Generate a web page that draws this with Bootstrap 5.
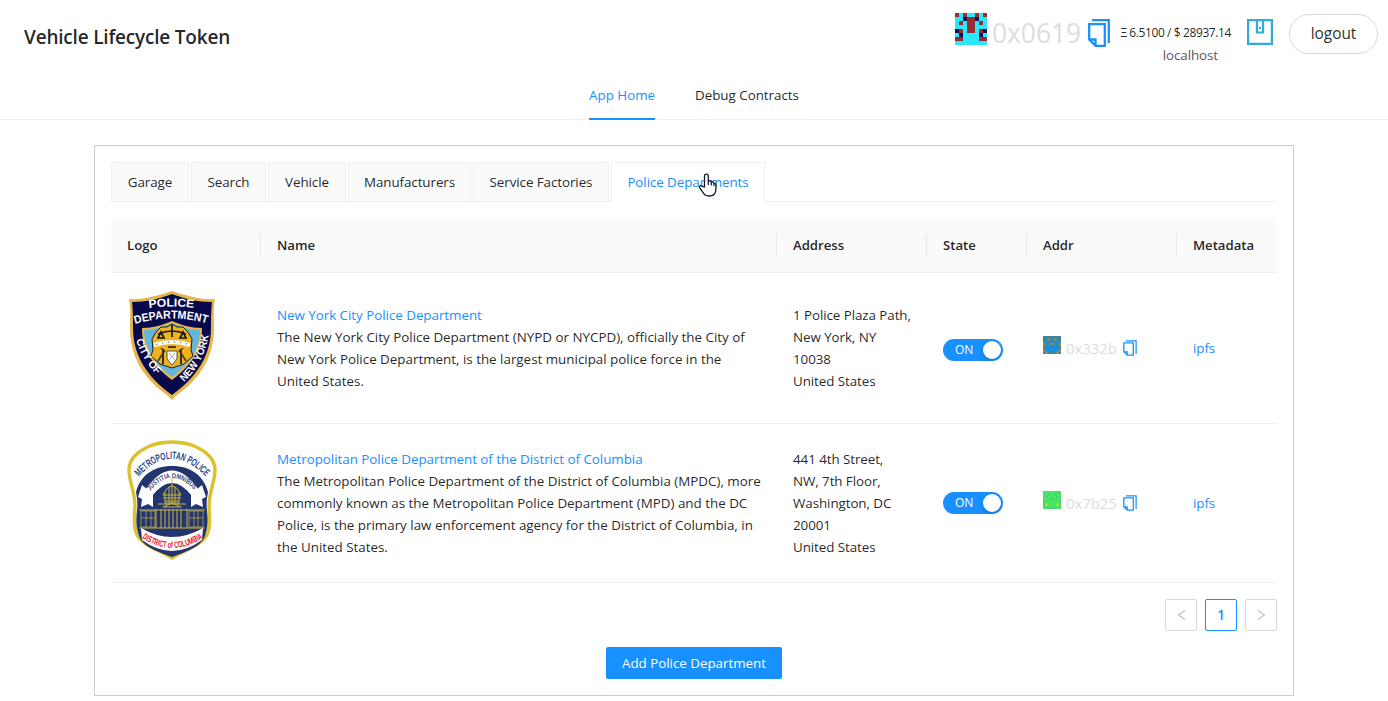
<!DOCTYPE html>
<html lang="en">
<head>
<meta charset="utf-8">
<title>Vehicle Lifecycle Token</title>
<link href="https://cdn.jsdelivr.net/npm/bootstrap@5.3.0/dist/css/bootstrap.min.css" rel="stylesheet">
<style>
:root{--blue:#1890ff;--line:#f0f0f0}
body{font-family:"Open Sans","Noto Sans",sans-serif;font-size:13.4px;line-height:22px;color:rgba(0,0,0,.87);overflow:hidden;letter-spacing:-.08px}
a{color:var(--blue);text-decoration:none}
svg{display:block;flex:none}
.topbar{height:72px;padding:0 10px 0 24px}
.brand-title{font-size:19px;font-weight:600;line-height:24px;margin-top:25px;letter-spacing:-.2px}
.addr-big{width:91px;margin:13px 5px 0 5px;font-size:26.5px;line-height:40px;color:#ddd;letter-spacing:-.1px}
.bal{width:112px;margin:22px 0 0 10px;font-size:12px;line-height:22px;letter-spacing:-.4px;padding-right:1px}
.net{color:#595959;font-size:13.4px;letter-spacing:-.1px;padding-right:13px;line-height:23px}
.logout{width:89px;height:40px;margin:14px 0 0 16px;border:1px solid #d9d9d9;font-size:15.4px;--bs-btn-padding-x:0;--bs-btn-padding-y:0;color:rgba(0,0,0,.85)}
.menu{height:48px;border-bottom:1px solid var(--line);gap:40px}
.menu a{line-height:46px;height:48px;color:inherit;white-space:nowrap;letter-spacing:-.03px}
.menu a.on{color:var(--blue);border-bottom:2px solid var(--blue)}
.panel{width:1200px;height:551px;margin:25px auto 0;border:1px solid #ccc;padding:16px}
.tabs{gap:2px;height:40px;box-shadow:inset 0 -1px var(--line)}
.tabs a{height:40px;line-height:38px;text-align:center;border:1px solid var(--line);background:#fafafa;color:inherit;border-radius:2px 2px 0 0;white-space:nowrap}
.tabs a.on{background:#fff;border-bottom-color:#fff;color:var(--blue);font-weight:500}
.list{table-layout:fixed;width:1166px;margin:16px 0;border-collapse:separate;border-spacing:0}
.list th,.list td{padding:0 16px;border-bottom:1px solid var(--line);vertical-align:middle;white-space:nowrap;position:relative}
.list td:nth-child(2){letter-spacing:-.01px}
.list td:nth-child(2) a{letter-spacing:-.04px}
.list th{height:55px;background:#fafafa;font-weight:600;font-size:13.2px;letter-spacing:-.03px}
.list th+th:before{content:"";position:absolute;left:-1px;top:16px;height:22px;width:1px;background:#e8e8e8}
.switch{width:60px;height:22px;border-radius:11px;background:var(--blue);color:#fff;font-size:12px;padding:0 2px 0 12px}
.switch i{width:18px;height:18px;border-radius:50%;background:#fff;box-shadow:0 2px 4px rgba(0,35,11,.2)}
.addr{color:#ddd;font-size:15px;width:52px;margin:0 5px}
.pg{width:32px;height:32px;border:1px solid #d9d9d9;border-radius:2px;color:#bfbfbf}
.pg.on{border-color:var(--blue);color:var(--blue);font-weight:600}
.add{width:176px;height:32px;margin-top:16px;background:var(--blue);border-radius:2px;border:0;color:#fff;font-size:13.4px;padding:0;letter-spacing:-.03px}
.pointer{position:absolute;left:698px;top:173px}
</style>
</head>
<body>
<svg width="0" height="0" class="position-absolute">
<symbol id="copy" viewBox="0 0 22 28"><path d="M4 1.2h16.8V24" fill="none" stroke="#1890ff" stroke-width="2.3"/><path d="M1.2 5.2h15.6v21.6H7.5L1.2 20.5zM1.2 20.5h6.3v6.3" fill="none" stroke="#1890ff" stroke-width="2.3"/></symbol>
<symbol id="copy-s" viewBox="0 0 14 16"><path d="M3 .8h10.1V14" fill="none" stroke="#1890ff" stroke-width="1.2"/><path d="M.8 2.9h9.5v12.3H4.2L.8 11.8zM.8 11.8h3.4v3.4" fill="none" stroke="#1890ff" stroke-width="1.3"/></symbol>
</svg>
<header class="topbar d-flex justify-content-between">
  <div class="brand-title">Vehicle Lifecycle Token</div>
  <div class="d-flex align-items-start">
    <svg width="32" height="32" viewBox="0 0 8 8" style="margin-top:13px" shape-rendering="crispEdges"><path fill="#2ae7fc" d="M0 0h8v8H0z"/><path fill="#932e35" d="M0 0h1v1H0zM2 0h1v1H2zM5 0h1v1H5zM7 0h1v1H7zM3 1h2v4H3zM1 2h1v1H1zM6 2h1v1H6zM1 4h1v1H1zM6 4h1v1H6zM0 6h2v1H0zM6 6h2v1H6z"/><path fill="#0d1250" d="M2 1h1v1H2zM5 1h1v1H5zM0 4h1v1H0zM7 4h1v1H7zM1 5h1v1H1zM6 5h1v1H6z"/></svg>
    <div class="addr-big">0x0619</div>
    <svg width="22" height="28" style="margin-top:19px"><use href="#copy"/></svg>
    <div class="bal text-end text-nowrap">Ξ 6.5100 / $ 28937.14<div class="net">localhost</div></div>
    <svg width="26" height="26" viewBox="0 0 26 26" style="margin:19px 0 0 15px" fill="none" stroke="#2fabdc" stroke-width="2.2"><path d="M1.100 1.100h23.800v23.800H1.100zM10 1v12.500h6V1"/><path d="M12 9h2" stroke-width="2.2"/></svg>
    <button class="btn logout rounded-pill">logout</button>
  </div>
</header>
<nav class="menu d-flex justify-content-center"><a class="on" href="#">App Home</a><a href="#">Debug Contracts</a></nav>
<main class="panel">
  <div class="tabs d-flex">
    <a href="#" style="width:78px">Garage</a><a href="#" style="width:75px">Search</a><a href="#" style="width:78px">Vehicle</a><a href="#" style="width:123px">Manufacturers</a><a href="#" style="width:136px">Service Factories</a><a href="#" class="on" style="width:154px">Police Departments</a>
  </div>
  <table class="list">
    <colgroup><col style="width:150px"><col style="width:516px"><col style="width:150px"><col style="width:100px"><col style="width:150px"><col style="width:100px"></colgroup>
    <thead><tr><th>Logo</th><th>Name</th><th>Address</th><th>State</th><th>Addr</th><th>Metadata</th></tr></thead>
    <tbody>
    <tr style="height:151px">
      <td>
        <svg width="90" height="110" viewBox="0 0 90 110" style="margin-top:-6px">
          <path d="M2 9C16 10 29 6 45 1c16 5 29 9 43 8-2 12-1 18-1 29 0 28-13 50-37 67q-5 5-5 5t-5-5C16 88 3 66 3 38 3 27 4 21 2 9z" fill="#e5b64b"/>
          <path d="M5 12c14 0 27-3 40-8 13 5 26 8 40 8-1 10-1 16-1 26 0 27-14 49-39 67C20 87 6 65 6 38c0-10 0-16-1-26z" fill="#07094b"/>
          <path d="M15 38c12 0 20-3 30-7 10 4 18 7 30 7 0 19-7 34-30 52C22 72 15 57 15 38z" fill="#e5b64b"/>
          <path d="M17 40c11 0 19-3 28-7 9 4 17 7 28 7-1 17-7 31-28 47C24 71 18 57 17 40z" fill="#66b5e0"/>
          <path d="M29 42l5-5h6l5-3 5 3h6l5 5 4 7-1 11 2 6-9 8-12 4-12-4-9-8 2-6-1-11z" fill="#efb320" stroke="#17202b" stroke-width="1"/>
          <path d="M31 44q14-6 28 0M45 35v12M34 42l-3 6h6zM56 42l-3 6h6zM36 59v15M54 59v15M41 57h8" fill="none" stroke="#171a1c" stroke-width="1.700"/>
          <path d="M38 60l-7 11M52 60l7 11M34 58l4 4M56 58l-4 4" fill="none" stroke="#4c3a12" stroke-width="1.600"/>
          <path d="M27 55q18-6 36 0" fill="none" stroke="#fff" stroke-width="4"/><path d="M29 54.500q16-5 33 0" fill="none" stroke="#777" stroke-width="1.200" stroke-dasharray="1.500 4.500"/>
          <path d="M40 61h10v8l-5 6-5-6z" fill="#fff" stroke="#555"/><path d="M42 63l6 7m0-7l-6 7" stroke="#aaa"/>
          <g fill="#fff" font-family="Liberation Sans,sans-serif" font-weight="700" letter-spacing="0">
          <path id="n1" d="M22 18Q45 15 68 18" fill="none"/><path id="n2" d="M8 34Q45 23 82 34" fill="none"/><path id="n3" d="M9 50Q15 70 32 87" fill="none"/><path id="n4" d="M57 92Q77 74 82 43" fill="none"/>
          <text font-size="11.500" textLength="45" lengthAdjust="spacingAndGlyphs"><textPath href="#n1">POLICE</textPath></text>
          <text font-size="11.500" textLength="73" lengthAdjust="spacingAndGlyphs"><textPath href="#n2">DEPARTMENT</textPath></text>
          <text font-size="10.500" textLength="41" lengthAdjust="spacingAndGlyphs"><textPath href="#n3">CITY OF</textPath></text>
          <text font-size="10.500" textLength="54" lengthAdjust="spacingAndGlyphs"><textPath href="#n4">NEW YORK</textPath></text></g>
        </svg>
      </td>
      <td><a href="#">New York City Police Department</a><br>The New York City Police Department (NYPD or NYCPD), officially the City of<br>New York Police Department, is the largest municipal police force in the<br>United States.</td>
      <td>1 Police Plaza Path,<br>New York, NY<br>10038<br>United States</td>
      <td class="pt-1"><div class="switch d-flex align-items-center justify-content-between">ON<i></i></div></td>
      <td><div class="d-flex align-items-center">
        <svg width="18" height="18" viewBox="0 0 8 8" style="margin-top:-7px"><path fill="#3b86a4" d="M0 0h8v8H0z"/><path fill="#178fe0" d="M1 2h1v2H1zM6 2h1v2H6zM3 2h2v1H3zM2 3h1v3H2zM5 3h1v3H5zM1 5h6v2H1zM3 4h2v1H3z"/><path fill="#b58b2a" d="M2 1h1v1H2zM5 1h1v1H5zM0 3h1v1H0zM7 3h1v1H7zM3 3h.7v1H3zM4.3 3H5v1h-.7zM0 6h1v1H0zM7 6h1v1H7zM1 7h1v1H1zM6 7h1v1H6z"/></svg>
        <span class="addr">0x332b</span><svg width="14" height="16"><use href="#copy-s"/></svg></div></td>
      <td><a href="#">ipfs</a></td>
    </tr>
    <tr style="height:159px">
      <td>
        <svg width="90" height="120" viewBox="0 0 90 120" style="margin-top:-6px">
          <path d="M45 2c12 0 20 2 28 7 9 5 15 12 15 21 0 12-6 21-6 36 1 15 2 25-5 33-8 9-20 11-32 19-12-8-24-10-32-19-7-8-6-18-5-33C8 51 2 42 2 30 2 21 8 14 17 9c8-5 16-7 28-7z" fill="#fff" stroke="#dcc12e" stroke-width="3.4"/>
          <path d="M45 26c19 0 32 10 36 26-1 6-2 12-1 18 1 9 1 17-1 22-2 14-18 19-34 25-16-6-32-11-34-25-2-5-2-13-1-22 1-6 0-12-1-18 4-16 17-26 36-26z" fill="#22356e"/>
          <path d="M19 49Q45 12 71 49l-6 7Q45 30 25 56z" fill="#fff"/><path d="M15 45l11 9v13l-5-3-7 3 1-8-4-2zM75 45l-11 9v13l5-3 7 3-1-8 4-2z" fill="#fff"/>
          <g fill="none" stroke="#c9b643" stroke-width="1"><path d="M45 38v7M36 55q9-18 18 0zM36 58h18M38 61h14M38 52v11h14V52M42 47v16M45 45v18M48 47v16M31 64h28M12 70h66M12 88h66M29 69v19M34 69v19M38 69v19M42 69v19M46 69v19M50 69v19M54 69v19M60 69v19M36 67l9-4 9 4z"/><path d="M14 71h14v16H14zM62 71h14v16H62zM19 71v16M24 71v16M67 71v16M71 71v16M14 78h14M62 78h14" stroke-width=".7"/></g>
          <path d="M14 88Q45 106 76 88l-1 12q-30 22-60 0z" fill="#fff"/>
          <path id="m1" d="M12 37Q44 0 80 38" fill="none"/><path id="m2" d="M23 51Q45 25 68 51" fill="none"/><path id="m3" d="M15 98Q45 118 76 98" fill="none"/>
          <g font-family="Liberation Sans,sans-serif" font-weight="700" letter-spacing="0"><text font-size="10.500" fill="#2a478f" textLength="78" lengthAdjust="spacingAndGlyphs"><textPath href="#m1">METROPOLITAN POLICE</textPath></text>
          <text font-size="7" fill="#34477b" textLength="52" lengthAdjust="spacingAndGlyphs"><textPath href="#m2">JUSTITIA OMNIBUS</textPath></text>
          <text font-size="9" fill="#e9202c" textLength="65" lengthAdjust="spacingAndGlyphs"><textPath href="#m3">DISTRICT of COLUMBIA</textPath></text></g>
        </svg>
      </td>
      <td><a href="#">Metropolitan Police Department of the District of Columbia</a><br>The Metropolitan Police Department of the District of Columbia (MPDC), more<br>commonly known as the Metropolitan Police Department (MPD) and the DC<br>Police, is the primary law enforcement agency for the District of Columbia, in<br>the United States.</td>
      <td>441 4th Street,<br>NW, 7th Floor,<br>Washington, DC<br>20001<br>United States</td>
      <td><div class="switch d-flex align-items-center justify-content-between">ON<i></i></div></td>
      <td><div class="d-flex align-items-center">
        <svg width="18" height="18" viewBox="0 0 8 8" style="margin-top:-7px"><path fill="#4be45f" d="M0 0h8v8H0z"/><path fill="#43d184" d="M0 0h1v1H0zM7 0h1v1H7zM2 1h1v1H2zM5 1h1v1H5zM1 2h1v1H1zM6 2h1v1H6zM3 3h2v1H3zM0 4h1v1H0zM7 4h1v1H7zM0 6h1v1H0zM7 6h1v1H7zM3 7h2v1H3z"/><path fill="#c9e12e" d="M1 5.5h1v1H1zM6 5.5h1v1H6z"/></svg>
        <span class="addr">0x7b25</span><svg width="14" height="16"><use href="#copy-s"/></svg></div></td>
      <td><a href="#">ipfs</a></td>
    </tr>
    </tbody>
  </table>
  <div class="d-flex justify-content-end gap-2">
    <span class="pg d-flex align-items-center justify-content-center"><svg width="9" height="10" viewBox="0 0 9 10"><path d="M8 .5L1.5 5 8 9.500" fill="none" stroke="#bfbfbf" stroke-width="1.1"/></svg></span>
    <span class="pg on d-flex align-items-center justify-content-center">1</span>
    <span class="pg d-flex align-items-center justify-content-center"><svg width="9" height="10" viewBox="0 0 9 10"><path d="M1 .5L7.500 5 1 9.500" fill="none" stroke="#bfbfbf" stroke-width="1.1"/></svg></span>
  </div>
  <button class="btn add d-block mx-auto">Add Police Department</button>
</main>
<svg class="pointer" width="20" height="24" viewBox="0 0 20 24"><path d="M6.500 14V3a1.900 1.900 0 0 1 3.800 0v5q2.700-.8 3 1 2.500-.5 2.600 1.200 2-.1 2 2V16c0 4-2 7-6.600 7C6 23 5.500 20 1.500 14.500 1 12.500 3 12 4.500 13.500z" fill="#fff" stroke="#15172b" stroke-width="1.300"/><path d="M10.300 8v4M13.300 9v3.500M15.900 10.500v2.500" stroke="#15172b" stroke-width="1.200"/></svg>
<script src="https://cdn.jsdelivr.net/npm/bootstrap@5.3.0/dist/js/bootstrap.bundle.min.js"></script>
</body>
</html>
